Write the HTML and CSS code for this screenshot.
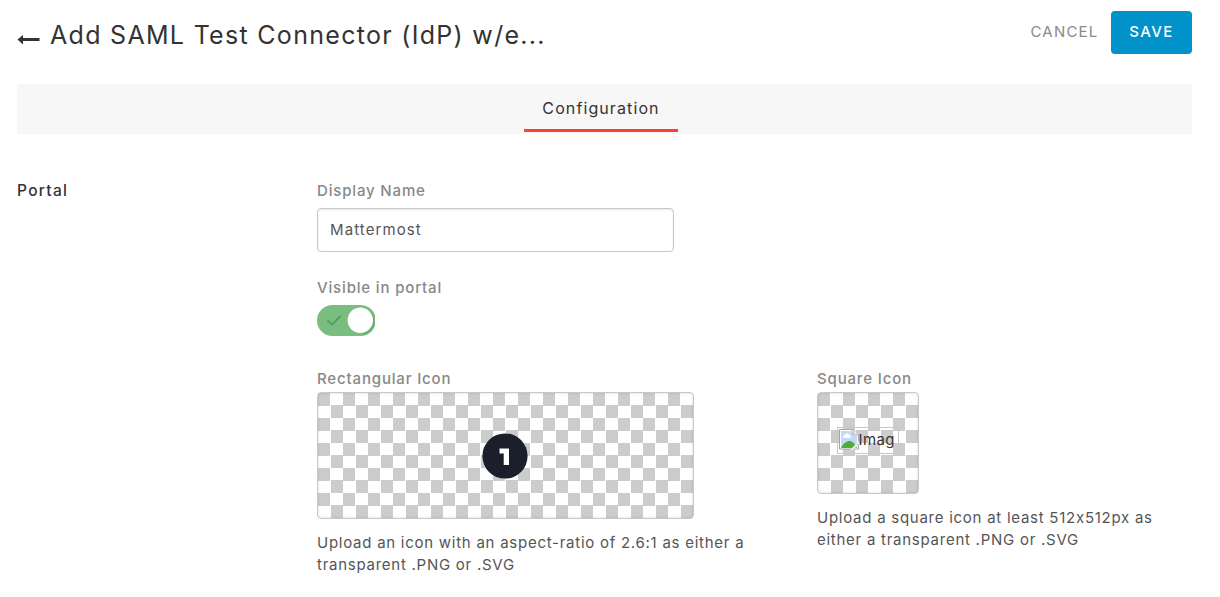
FILE: index.html
```html
<!DOCTYPE html>
<html lang="en">
<head>
<meta charset="utf-8">
<title>Add SAML Test Connector</title>
<link rel="stylesheet" href="styles.css">
</head>
<body>
<header class="header">
  <svg class="back" width="23" height="12" viewBox="0 0 23 12"><path d="M0.5 6.500 6 2v3h16.500v3H6v3.500z" fill="#333"/></svg>
  <h1 class="title">Add SAML Test Connector (IdP) w/e...</h1>
  <button class="cancel">CANCEL</button>
  <button class="save">SAVE</button>
</header>
<nav class="tabs"><a class="tab">Configuration</a></nav>
<main class="section">
  <h2 class="heading">Portal</h2>
  <div class="fields">
    <label class="label l-name" for="name">Display Name</label>
    <input class="input" id="name" value="Mattermost">
    <div class="label l-visible">Visible in portal</div>
    <svg class="toggle" width="58" height="31" viewBox="0 0 58 31">
      <rect width="59" height="31" rx="15.5" fill="#79be80"/>
      <path d="M10.5 15.500 15 19.700 23.500 11" fill="none" stroke="#51a05a" stroke-width="2"/>
      <path d="M46 3.2A13 13 0 0 1 46 28.8" fill="none" stroke="#68aa6e" stroke-width="1.5"/>
      <circle cx="43.3" cy="15.3" r="12.7" fill="#fff"/>
    </svg>
    <div class="icons">
      <div class="icon-field">
        <div class="label">Rectangular Icon</div>
        <div class="preview rect">
          <svg class="badge" width="46" height="46" viewBox="0 0 46 46"><circle cx="23" cy="23" r="22.6" fill="#1b1f2b"/><path d="M17.500 15.500h9.500V32h-5.300V20.500H17.500z" fill="#fff"/></svg>
        </div>
        <p class="hint">Upload an icon with an aspect-ratio of 2.6:1 as either a<br>transparent .PNG or .SVG</p>
      </div>
      <div class="icon-field">
        <div class="label">Square Icon</div>
        <div class="preview square">
          <div class="broken">
            <svg width="20" height="21" viewBox="0 0 20 21">
              <path d="M.5.5H14l5.500 5.500v14H.5z" fill="#fff" stroke="#a5a5a5"/>
              <path d="M2 2h11.500v5H18v11.500H2z" fill="#c3d9f8"/>
              <path d="M4 8a2 2 0 0 1 2-2 2.500 2.500 0 0 1 4.500 0 1.500 1.500 0 0 1 0 3H4.500z" fill="#fff"/>
              <path d="M2 19C4.500 14 7.500 12 10.500 12s5.500 3 7.500 7z" fill="#53a93a"/>
              <path d="M14 .5V6h5.500" fill="#eee" stroke="#a5a5a5"/>
              <path d="M11 21 20 11.500V15L14.500 21z" fill="#e7e7e7"/>
            </svg><span class="alt">Imag</span>
          </div>
        </div>
        <p class="hint">Upload a square icon at least 512x512px as<br>either a transparent .PNG or .SVG</p>
      </div>
    </div>
  </div>
</main>
</body>
</html>
```
FILE: styles.css
```css
* { box-sizing: border-box; }
body { margin: 0; padding: 11px 28px 0 17px; background: #fff; color: #333; font: 15px/22px Inter, "Liberation Sans", sans-serif; }
.header { display: flex; height: 43px; }
.back { margin-top: 22px; flex: none; }
.title { margin: 6px auto 0 10px; font-size: 25px; line-height: 36px; font-weight: 400; letter-spacing: 1.3px; white-space: nowrap; }
.cancel, .save { border: 0; padding: 0 0 2px; font: 500 15px/22px Inter, sans-serif; }
.cancel { width: 69px; margin-right: 12px; background: none; color: #8a8a8a; font-weight: 400; white-space: nowrap; letter-spacing: 1.2px; }
.save { width: 81px; height: 43px; border-radius: 4px; background: #0092c8; color: #fff; letter-spacing: 1.4px; }
.tabs { display: flex; height: 50px; margin-top: 30px; padding-left: 507px; background: #f7f7f7; }
.tab { width: 154px; height: 48px; border-bottom: 3px solid #fb4136; padding-top: 13px; text-align: center; font-size: 16px; letter-spacing: 1.1px; }
.section { display: flex; margin-top: 46px; }
.heading { width: 300px; margin: 0; font-size: 15.5px; line-height: 22px; font-weight: 500; letter-spacing: 1.3px; }
.fields { flex: 1; }
.label { display: block; height: 22px; color: #888; font-size: 15px; font-weight: 500; letter-spacing: 0.84px; white-space: nowrap; }
.input { display: block; width: 357px; height: 44px; margin-top: 6px; padding: 0 12px 2px; border: 1px solid #c8c8c8; border-radius: 4px; box-shadow: inset 0 1px 2px rgba(0,0,0,.1); color: #555; font: 15px Inter, sans-serif; letter-spacing: 1.1px; }
.l-visible { margin-top: 25px; }
.toggle { display: block; margin-top: 6px; }
.icons { display: grid; grid-template-columns: 500px 1fr; margin-top: 32px; }
.preview { display: flex; align-items: center; justify-content: center; margin-top: 2px; border: 1px solid #c8c8c8; border-radius: 4px; background: repeating-conic-gradient(#fff 0 25%, #ccc 0 50%) 0 0 / 25px 25px; box-shadow: inset 0 0 3px rgba(0,0,0,.15); }
.rect { width: 377px; height: 127px; }
.badge { margin-right: 1px; }
.square { width: 102px; height: 102px; }
.broken { display: flex; width: 62px; height: 27px; margin: -5px 1px 0 0; padding: 1px; border: 1px solid #c8c8c8; }
.broken svg { flex: none; }
.alt { color: #333; font-size: 15px; line-height: 22px; letter-spacing: 0.4px; }
.hint { margin: 13px 0 0; color: #555; font-size: 15px; letter-spacing: 0.74px; white-space: nowrap; }
```
